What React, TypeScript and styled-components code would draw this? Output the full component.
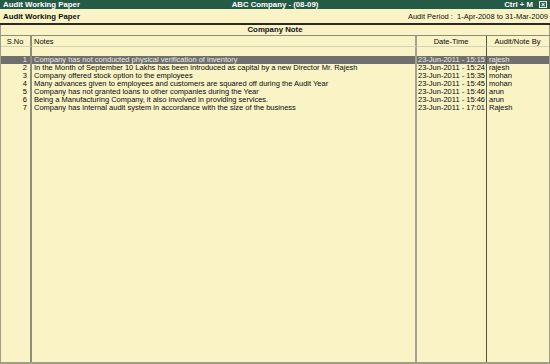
import React from "react";
import styled, { createGlobalStyle } from "styled-components";

const Global = createGlobalStyle`
  html, body { margin: 0; padding: 0; background: #f9f3c6; }
  body { font-family: "Liberation Sans", Arial, sans-serif; }
`;

const Window = styled.div`
  width: 550px;
  height: 364px;
  display: flex;
  flex-direction: column;
  background: #f9f3c6;
  box-sizing: border-box;
  overflow: hidden;
  font-family: "Liberation Sans", Arial, sans-serif;
  color: #111;
`;

const TitleBar = styled.div`
  height: 9px;
  background: #245a46;
  color: #fff;
  font-weight: bold;
  font-size: 7.8px;
  line-height: 9px;
  display: grid;
  grid-template-columns: 1fr auto 1fr;
  align-items: center;
  padding: 0 3px 0 3px;
`;

const TitleCenter = styled.span`
  text-align: center;
`;

const TitleRight = styled.span`
  display: flex;
  justify-content: flex-end;
  align-items: center;
  gap: 6px;
`;

const CloseBox = styled.span`
  width: 8px;
  height: 7px;
  border: 1px solid #e8eee8;
  box-sizing: border-box;
  display: inline-flex;
  align-items: center;
  justify-content: center;
  font-size: 7px;
  line-height: 5px;
  font-weight: bold;
`;

const InfoBar = styled.div`
  height: 14px;
  display: flex;
  justify-content: space-between;
  align-items: center;
  padding: 0 2px 0 3px;
  font-size: 7.5px;
  border-bottom: 2px solid #2a2a22;
`;

const InfoTitle = styled.span`
  font-weight: bold;
  font-size: 7.8px;
`;

const Caption = styled.div`
  height: 10px;
  line-height: 10px;
  text-align: center;
  font-weight: bold;
  font-size: 7.8px;
  border-bottom: 1px solid #8c8c7c;
  border-left: 1px solid #a09e88;
  border-right: 1px solid #a09e88;
`;

const Table = styled.div`
  flex: 1;
  display: grid;
  grid-template-columns: 31px 385px 70px 1fr;
  grid-template-rows: 11px 9px repeat(7, 8px) 1fr;
  border-left: 1px solid #a09e88;
  border-right: 1px solid #a09e88;
  border-bottom: 2px solid #a09e88;
  font-size: 7.5px;
`;

type CellProps = { $col: number; $align?: "left" | "right" | "center"; $hl?: boolean };

const sepFor = (col: number) =>
  col === 0
    ? "border-right: 2px solid #8e8c7a;"
    : col === 1
    ? "border-right: 2px solid #a4a290;"
    : col === 2
    ? "border-right: 1px solid #55554a;"
    : "";

const Cell = styled.div<CellProps>`
  ${(p) => sepFor(p.$col)}
  text-align: ${(p) => p.$align || "left"};
  padding: ${(p) => (p.$col === 2 ? "0 2px 0 1px" : "0 3px 0 2px")};
  line-height: 8px;
  white-space: nowrap;
  overflow: hidden;
  background: ${(p) => (p.$hl ? "#6f6f6d" : "transparent")};
  color: ${(p) => (p.$hl ? "#e8e8e0" : "#0a0a0a")};
`;

const HeadCell = styled(Cell)`
  line-height: 11px;
  border-bottom: 1px solid #d6d2b4;
`;

const rows = [
  ["1", "Company has not conducted physical verification of inventory", "23-Jun-2011 - 15:15", "rajesh"],
  ["2", "In the Month of September 10 Lakhs has been introduced as capital by a new Director Mr. Rajesh", "23-Jun-2011 - 15:24", "rajesh"],
  ["3", "Company offered stock option to the employees", "23-Jun-2011 - 15:35", "mohan"],
  ["4", "Many advances given to employees and customers  are squared off during the Audit Year", "23-Jun-2011 - 15:45", "mohan"],
  ["5", "Company has not granted loans to other companies during the Year", "23-Jun-2011 - 15:46", "arun"],
  ["6", "Being a Manufacturing Company, it also involved in providing services.", "23-Jun-2011 - 15:46", "arun"],
  ["7", "Company has internal audit system in accordance with the size of the business", "23-Jun-2011 - 17:01", "Rajesh"],
];

export default function App() {
  return (
    <>
      <Global />
      <Window>
        <TitleBar>
          <span>Audit Working Paper</span>
          <TitleCenter>ABC Company - (08-09)</TitleCenter>
          <TitleRight>
            <span>Ctrl + M</span>
            <CloseBox>×</CloseBox>
          </TitleRight>
        </TitleBar>
        <InfoBar>
          <InfoTitle>Audit Working Paper</InfoTitle>
          <span>Audit Period :&nbsp; 1-Apr-2008 to 31-Mar-2009</span>
        </InfoBar>
        <Caption>Company Note</Caption>
        <Table>
          <HeadCell $col={0} $align="center">S.No</HeadCell>
          <HeadCell $col={1}>Notes</HeadCell>
          <HeadCell $col={2} $align="center">Date-Time</HeadCell>
          <HeadCell $col={3} $align="center">Audit/Note By</HeadCell>
          <Cell $col={0} />
          <Cell $col={1} />
          <Cell $col={2} />
          <Cell $col={3} />
          {rows.map((r, i) => (
            <React.Fragment key={r[0]}>
              <Cell $col={0} $align="right" $hl={i === 0}>{r[0]}</Cell>
              <Cell $col={1} $hl={i === 0}>{r[1]}</Cell>
              <Cell $col={2} $hl={i === 0}>{r[2]}</Cell>
              <Cell $col={3} $hl={i === 0}>{r[3]}</Cell>
            </React.Fragment>
          ))}
          <Cell $col={0} />
          <Cell $col={1} />
          <Cell $col={2} />
          <Cell $col={3} />
        </Table>
      </Window>
    </>
  );
}
